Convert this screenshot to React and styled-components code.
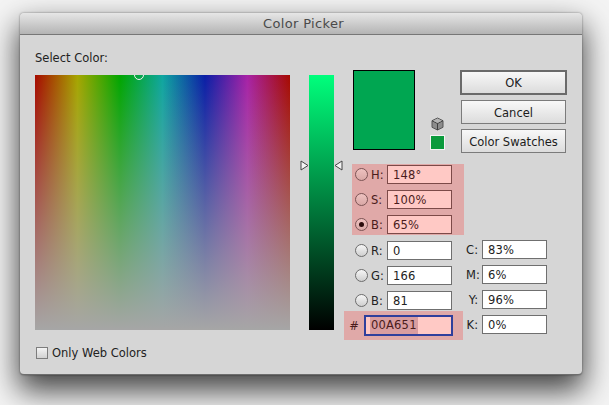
import React from 'react';
import styled, { createGlobalStyle, css } from 'styled-components';

const GlobalStyle = createGlobalStyle`
	html, body {
		margin: 0;
		padding: 0;
		background: #f4f4f4;
	}
	body {
		font-family: "DejaVu Sans", "Liberation Sans", sans-serif;
		font-size: 11.5px;
		color: #222222;
	}
`;

const Page = styled.div`
	width: 609px;
	height: 405px;
	padding: 13px 0 0 20px;
	box-sizing: border-box;
	overflow: hidden;
`;

const Dialog = styled.div`
	width: 562px;
	height: 362px;
	box-sizing: border-box;
	background: #d6d6d6;
	border-radius: 4px;
	border-bottom: 1px solid #6e6e6e;
	box-shadow: 0 0 2px rgba(0, 0, 0, .5), 0 14px 30px 2px rgba(0, 0, 0, .72);
`;

const TitleBar = styled.div`
	height: 21px;
	padding-left: 5px;
	line-height: 21px;
	text-align: center;
	font-size: 13px;
	color: #4a4a4a;
	letter-spacing: .35px;
	border-radius: 4px 4px 0 0;
	border-bottom: 1px solid #777777;
	background: linear-gradient(#e6e6e6, #b4b4b4);
`;

const Body = styled.div`
	display: flex;
	padding-left: 15px;
`;

const LeftColumn = styled.div`
	width: 255px;
`;

const SelectLabel = styled.div`
	height: 40px;
	line-height: 46px;
`;

const ColorField = styled.div`
	position: relative;
	width: 255px;
	height: 255px;
	overflow: hidden;
	background:
		linear-gradient(rgba(166, 166, 166, 0), #a6a6a6),
		linear-gradient(to right, #a60a00, #a6a600 16.67%, #00a600 33.33%, #0ea6a0 50%, #0a1ea6 66.67%, #a822a6 83.33%, #a60a00);
`;

const FieldMarker = styled.div`
	position: absolute;
	left: 99px;
	top: -5px;
	width: 8px;
	height: 8px;
	border: 1px solid #f2f2f2;
	border-radius: 50%;
`;

const WebColors = styled.label`
	display: flex;
	align-items: center;
	gap: 4px;
	margin: 16px 0 0 1px;
`;

const Checkbox = styled.span`
	width: 10px;
	height: 10px;
	border: 1px solid #7d7d7d;
	background: linear-gradient(#f4f4f4, #d2d2d2);
`;

const HueColumn = styled.div`
	position: relative;
	width: 25px;
	height: 255px;
	margin: 40px 19px 0 19px;
	background: linear-gradient(#00ff7c, #000000);
`;

const HueHandle = styled.svg`
	position: absolute;
	top: 85px;
	width: 9px;
	height: 11px;
	${props => props.$side === 'left' ? css`left: -9px;` : css`right: -9px; transform: scaleX(-1);`}
`;

const RightColumn = styled.div`
	width: 214px;
	padding-top: 35px;
`;

const TopRow = styled.div`
	display: flex;
	height: 94px;
`;

const NewColor = styled.div`
	width: 60px;
	height: 78px;
	background: #00a651;
	border: 1px solid #000000;
`;

const WebSafe = styled.div`
	display: flex;
	flex-direction: column;
	align-items: center;
	gap: 4px;
	width: 45px;
	padding-top: 47px;
	box-sizing: border-box;
`;

const SafeSwatch = styled.div`
	width: 13px;
	height: 13px;
	background: #0a9a3c;
	border: 1px solid #f4f4f4;
`;

const Buttons = styled.div`
	display: flex;
	flex-direction: column;
	align-items: center;
	gap: 5px;
	width: 107px;
`;

const Button = styled.button`
	width: 105px;
	height: 24px;
	padding: 1px 0 0;
	box-sizing: border-box;
	font: inherit;
	font-size: 11.5px;
	color: #1c1c1c;
	border: 1px solid #7b7b7b;
	background: linear-gradient(#f8f8f8, #dcdcdc);
	${props => props.$primary && css`
		width: 107px;
		height: 25px;
		border: 2px solid #6a6a6a;
	`}
`;

const Fields = styled.div`
	display: flex;
	margin-left: -9px;
`;

const ColorRows = styled.div`
	display: flex;
	flex-direction: column;
	gap: 6px;
	width: 122px;
`;

const ProcessRows = styled(ColorRows)`
	padding-top: 76px;
	width: 81px;
`;

const Highlight = styled.div`
	display: flex;
	flex-direction: column;
	gap: 6px;
	width: 112px;
	margin-left: 8px;
	padding: 1px 0;
	background: #e0a9a8;
`;

const HexHighlight = styled.div`
	display: flex;
	align-items: center;
	width: 119px;
	height: 29px;
	margin-top: -5px;
	background: #e0a9a8;
	color: #4b1c1c;
`;

const Row = styled.div`
	display: flex;
	align-items: center;
	height: 19px;
	margin-left: ${props => props.$indent || 0}px;
	color: ${props => props.$tinted ? '#4b1c1c' : '#222222'};
`;

const Radio = styled.span`
	position: relative;
	flex: none;
	width: 11px;
	height: 11px;
	margin: 0 3px 0 3px;
	border: 1px solid ${props => props.$tinted ? '#7c5555' : '#6d6d6d'};
	border-radius: 50%;
	background: ${props => props.$tinted ? 'linear-gradient(#eec2c0, #d9a8a6)' : 'linear-gradient(#f6f6f6, #cfcfcf)'};
	${props => props.$checked && css`
		&::after {
			content: '';
			position: absolute;
			left: 3px;
			top: 3px;
			width: 5px;
			height: 5px;
			border-radius: 50%;
			background: #2a0c0c;
		}
	`}
`;

const FieldLabel = styled.span`
	flex: none;
	box-sizing: border-box;
	width: ${props => props.$width || 16}px;
	padding: 1px ${props => props.$gap || 0}px 0 0;
	text-align: ${props => props.$align || 'left'};
`;

const Input = styled.div`
	width: 65px;
	height: 19px;
	box-sizing: border-box;
	padding-left: 5px;
	line-height: 18px;
	letter-spacing: .2px;
	border: 1px solid #6f6f6f;
	background: #ffffff;
	${props => props.$tinted && css`
		border-color: #7c4a48;
		background: #ffc9c5;
		color: #4b1c1c;
	`}
`;

const HexInput = styled(Input)`
	width: 89px;
	height: 21px;
	margin-left: 5px;
	padding-left: 4px;
	line-height: 17px;
	border: 2px solid #2f3f9c;
	background: #ffc9c5;
`;

const Selection = styled.span`
	display: inline-block;
	padding: 0 1px;
	background: #d99da0;
`;

function Cube() {
	return (
		<svg width="13" height="14" viewBox="0 0 13 14">
			<path d="M6.5 1 12 3.7v6.6L6.5 13 1 10.3V3.7z" fill="#8c8c8c" stroke="#555555" />
			<path d="M1 3.7 6.5 6.5 12 3.7M6.5 6.5V13" fill="none" stroke="#3f3f3f" />
			<path d="M6.5 1.6 11 3.7 6.5 5.9 2 3.7z" fill="#b5b5b5" />
		</svg>
	);
}

function Handle({ side }) {
	return (
		<HueHandle $side={side} viewBox="0 0 9 11">
			<path d="M1 1 8 5.5 1 10z" fill="#f4f4f4" stroke="#444444" />
		</HueHandle>
	);
}

const HSB = [
	{ key: 'H', value: '148°' },
	{ key: 'S', value: '100%' },
	{ key: 'B', value: '65%', checked: true },
];
const RGB = [
	{ key: 'R', value: '0' },
	{ key: 'G', value: '166' },
	{ key: 'B', value: '81' },
];
const CMYK = [
	{ key: 'C', value: '83%' },
	{ key: 'M', value: '6%' },
	{ key: 'Y', value: '96%' },
	{ key: 'K', value: '0%' },
];

export default function App() {
	return (
		<Page>
			<GlobalStyle />
			<Dialog>
				<TitleBar>Color Picker</TitleBar>
				<Body>
					<LeftColumn>
						<SelectLabel>Select Color:</SelectLabel>
						<ColorField>
							<FieldMarker />
						</ColorField>
						<WebColors>
							<Checkbox />
							Only Web Colors
						</WebColors>
					</LeftColumn>
					<HueColumn>
						<Handle side="left" />
						<Handle side="right" />
					</HueColumn>
					<RightColumn>
						<TopRow>
							<NewColor />
							<WebSafe>
								<Cube />
								<SafeSwatch />
							</WebSafe>
							<Buttons>
								<Button $primary>OK</Button>
								<Button>Cancel</Button>
								<Button>Color Swatches</Button>
							</Buttons>
						</TopRow>
						<Fields>
							<ColorRows>
								<Highlight>
									{HSB.map(f => (
										<Row key={f.key} $tinted>
											<Radio $tinted $checked={f.checked} />
											<FieldLabel>{f.key}:</FieldLabel>
											<Input $tinted>{f.value}</Input>
										</Row>
									))}
								</Highlight>
								{RGB.map(f => (
									<Row key={f.key} $indent={8}>
										<Radio />
										<FieldLabel>{f.key}:</FieldLabel>
										<Input>{f.value}</Input>
									</Row>
								))}
								<HexHighlight>
									<FieldLabel $width={15} $align="right">#</FieldLabel>
									<HexInput>
										<Selection>00A651</Selection>
									</HexInput>
								</HexHighlight>
							</ColorRows>
							<ProcessRows>
								{CMYK.map(f => (
									<Row key={f.key}>
										<FieldLabel $width={16} $gap={4} $align="right">{f.key}:</FieldLabel>
										<Input>{f.value}</Input>
									</Row>
								))}
							</ProcessRows>
						</Fields>
					</RightColumn>
				</Body>
			</Dialog>
		</Page>
	);
}
